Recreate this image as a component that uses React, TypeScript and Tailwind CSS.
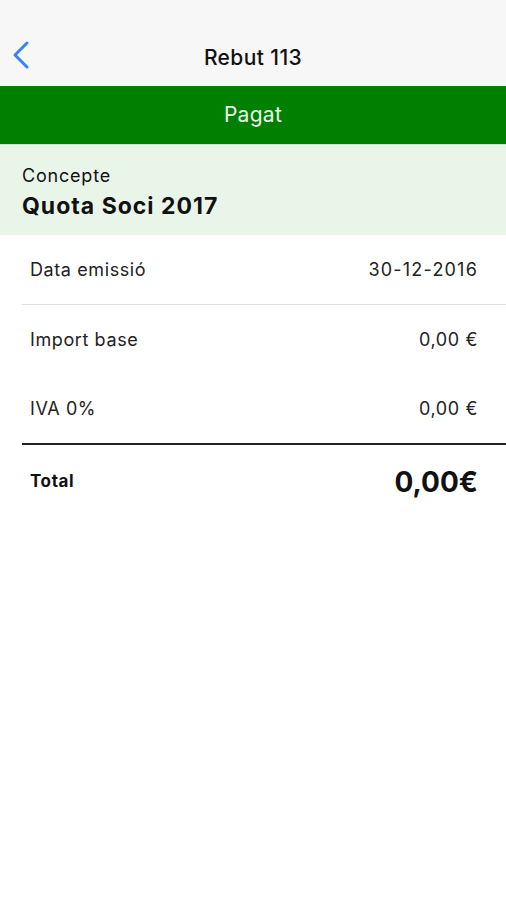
const rows = [
  { label: "Import base", value: "0,00 €" },
  { label: "IVA 0%", value: "0,00 €" },
];

export default function App() {
  return (
    <div className="min-h-[900px] w-[506px] bg-white font-['Inter',_Arial,_sans-serif] text-[#111]">
      {/* nav */}
      <div className="relative flex h-[86px] items-end justify-center bg-[#f7f7f7] pb-[18px]">
        <svg className="absolute left-[10px] top-[40px] h-[30px] w-[22px]" viewBox="0 0 22 30" fill="none">
          <path d="M17 3 L5 15 L17 27" stroke="#3b82f6" strokeWidth={3} strokeLinecap="round" strokeLinejoin="round" />
        </svg>
        <h1 className="text-[21px] font-medium leading-none tracking-[0.4px]">Rebut 113</h1>
      </div>

      <div className="flex h-[58px] items-center justify-center bg-[#007f00]">
        <span className="text-[21px] tracking-[0.3px] text-[#eaf7ea]">Pagat</span>
      </div>

      <div className="flex h-[91px] flex-col justify-center border-t border-[#c9e6c9] bg-[#eaf5ea] px-[22px] pt-[6px]">
        <span className="text-[18px] leading-tight tracking-[0.8px]">Concepte</span>
        <span className="mt-[5px] text-[23px] font-bold leading-tight tracking-[1px]">Quota Soci 2017</span>
      </div>

      <div className="pl-[22px]">
        <div className="flex h-[69px] items-center justify-between pl-[8px] pr-[28px] text-[18px] tracking-[0.6px] text-[#222]">
          <span>Data emissió</span>
          <span className="tracking-[1.2px]">30-12-2016</span>
        </div>
        <div className="h-px bg-[#dedede]" />
        {rows.map((r) => (
          <div key={r.label} className="flex h-[69px] items-center justify-between pl-[8px] pr-[28px] text-[18px] tracking-[0.6px] text-[#222]">
            <span>{r.label}</span>
            <span>{r.value}</span>
          </div>
        ))}
        <div className="h-[2px] bg-[#222]" />
        <div className="flex h-[74px] items-center justify-between pl-[8px] pr-[28px]">
          <span className="text-[17px] font-bold tracking-[0.6px]">Total</span>
          <span className="text-[28px] font-bold">0,00€</span>
        </div>
      </div>
    </div>
  );
}
